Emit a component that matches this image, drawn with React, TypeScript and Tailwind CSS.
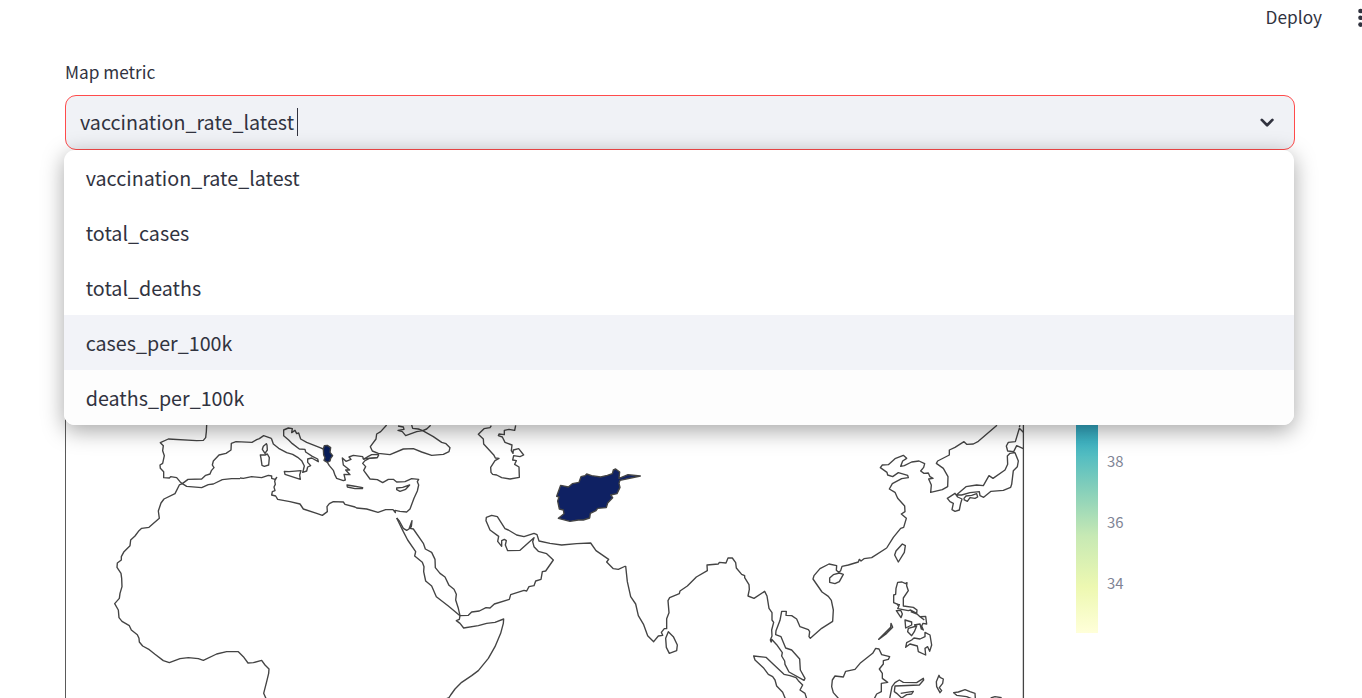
import React from "react";

const options = ["vaccination_rate_latest", "total_cases", "total_deaths", "cases_per_100k", "deaths_per_100k"];
const highlighted = 3;

/* Each tile holds coastlines in thirds of a pixel, offset to the tile's origin. */
const tiles: { x: number; y: number; d: string[] }[] = [
  {
    x: 50,
    y: 415,
    d: [
      "M470 30L469 50 467 68 460 76 440 77 355 72 331 83 340 92 338 107 343 122 338 145 330 150 331 160 341 170 341 188 358 189 362 185 380 188 390 200 397 206 414 193 455 192 467 181 480 177 484 167 492 158 487 150 490 138 507 120 528 115 543 105 544 85 558 80 606 82 620 74 628 71 641 62 664 70",
      "M570 191L545 191 517 194 490 207 475 209 455 218 410 214 397 206 388 210 375 236 342 252 333 264 325 288 328 310 297 337 275 340 267 347 255 363 242 375 240 392 222 410 214 425 214 435 202 444 201 457 213 475 215 490 216 515 210 535 208 550 194 566 205 585 207 608 216 619 238 632 244 645 262 659 267 670 268 681 278 693 298 704 315 718 340 737 358 743 390 731 415 728 445 731 460 736 500 717 530 710 565 710 580 725 594 744 610 743 635 736 645 750 657 762 656 775 650 800 641 835 650 855",
    ],
  },
  {
    x: 240,
    y: 415,
    d: [
      "M94 70L100 87 116 100 140 113 158 118 173 127 185 137 193 153 190 165 188 172 200 168 203 156 212 152 203 142 203 132 215 129 235 140 233 132 217 124 197 111 195 103 178 102 157 86 146 75 131 62 131 45 145 39 157 41 155 53 165 46 170 56 176 54 182 72 200 82 240 98 250 102",
      "M262 142L268 152 280 166 284 178 290 190 310 197 316 195 312 178 330 179 317 165 329 165 310 150 307 129 318 139 333 133 327 126 340 121 368 125 371 133 385 124 395 119 414 118 416 120 412 128 388 130 375 137 368 145 377 155 371 166 390 192 412 194 428 203 445 193 460 193 470 201 495 200 515 191 536 193 532 200 536 210 532 228 522 250 510 282 500 291 480 289 465 286 466 293 459 284 437 284 414 292 380 282 350 279 345 276 315 268 310 261 280 260 268 266 261 275 262 290 247 301 230 295 190 282 180 267 150 260 113 253 107 243 95 240 97 230 105 227 102 216 106 208 104 198 110 187 105 193 95 190 95 183 85 181 65 188 35 185 10 190 0 189",
      "M440 30L422 50 410 57 408 72 391 95 397 108 415 115 450 119 490 102 520 101 545 111 575 121 610 118 627 110 630 98 618 86 605 82 580 65 548 47 530 50 497 62 487 50 474 46 492 43 490 36 474 33M515 30L518 40 535 42 548 47 560 42 572 31",
      "M79 86L70 94 67 103 75 115 82 105 81 90ZM61 120L75 120 82 117 88 128 86 150 73 154 66 151 63 130ZM133 169L147 170 183 167 179 180 181 193 135 178ZM321 210L340 213 368 218 367 221 345 221 322 216ZM470 219L488 217 509 210 497 223 480 229 470 224ZM368 131L385 130 412 128",
    ],
  },
  {
    x: 470,
    y: 415,
    d: [
      "M64 32L60 38 42 41 25 58 40 72 41 87 72 121 76 129 87 130 75 137 62 157 63 172 68 178 80 180 95 188 120 192 148 187 147 156 134 148 139 137 128 135 131 122 150 125 161 120 146 101 130 105 129 115 124 107 126 90 105 82 97 66 85 62 87 57 103 59 103 46 117 43 134 46 137 31",
    ],
  },
  {
    x: 860,
    y: 415,
    d: [
      "M80 399L100 367 122 340 131 337 139 310 124 297 135 290 134 273 113 250 105 232 88 222 97 206 125 191 145 188 143 181 115 173 98 185 83 180 81 172 61 158 67 150 85 149 105 131 130 121 140 130 128 138 122 154 133 152 155 141 177 138 194 146 191 157 182 168 192 175 205 174 210 185 219 190 206 192 214 210 212 232 247 224 263 215 264 185 250 160 229 145 233 138 268 120 268 105 285 97 312 80 320 88 340 87 355 79 411 31",
      "M289 240L318 215 350 210 370 212 387 182 399 190 435 165 443 148 442 123 450 115 465 113 475 138 472 155 460 167 455 208 452 217 430 226 393 229 371 247 360 242 358 230 330 233 305 240ZM262 250L285 235 293 246 306 252 302 265 298 285 285 289 276 284 280 265 270 260ZM312 250L318 243 335 241 350 236 353 246 345 250 330 248 322 259 313 255ZM490 52L478 40 466 80 445 82 439 93 443 108 461 110 470 92 490 101M478 36L480 31",
      "M127 387L136 392 133 412 115 441 104 420 108 408Z",
    ],
  },
  {
    x: 380,
    y: 500,
    d: [
      "M50 54L58 63 70 85 80 91 87 87 96 62 94 80 90 85 100 87 130 130 136 147 155 157 165 178 166 203 180 220 195 231 207 256 222 268 229 283 227 300 235 325 240 347 265 346 275 336 298 333 318 323 330 324 343 312 388 298 392 284 432 271 440 273 447 260 462 257 467 243 483 238 487 215 497 213 520 180 500 161 475 154 462 140 458 125 462 113 420 151 383 152 376 135 379 122 373 118 365 122 365 139 353 124 356 109 330 90 318 62 319 52 335 46 352 50 375 86 385 90 410 105 432 110 462 100 471 104 477 123 510 130 545 135 590 131 632 129 648 152 686 178 680 186 700 206 715 208 737 198",
      "M50 54L70 95 83 120 107 155 104 168 127 187 132 200 131 215 137 243 155 258 169 290 205 318 240 347 238 358 229 362 240 370 251 384 295 377 320 370 345 367 371 357 370 370 362 400 345 440 325 475 295 512 275 527 245 547 225 567 212 585 207 593 195 598",
    ],
  },
  {
    x: 600,
    y: 530,
    d: [
      "M77 108L82 155 92 200 107 222 115 257 131 284 143 317 161 335 175 318 188 316 184 307 193 296 200 296 200 266 207 248 204 212 209 203 238 191 240 183 262 168 289 141 322 122 321 105 355 102 358 97 378 99 384 84 397 84 407 98 409 114 425 133 434 137 434 143 447 164 448 178 444 198 462 205 494 184 501 198 507 235 516 248 516 270 521 277 515 300 516 318 511 330 514 337",
      "M205 305L220 320 232 345 230 362 208 370 199 352 197 325Z",
    ],
  },
  {
    x: 740,
    y: 540,
    d: [
      "M94 307L95 298 110 314 127 338 125 348 134 363 135 373 147 396 192 421 195 415 181 390 179 357 155 330 137 324 123 290 107 284 108 272 120 241 125 214 139 214 138 226 155 227 170 237 180 260 205 269 209 275 207 290 211 295 245 265 278 244 280 210 274 181 265 169 246 156 219 117 222 107 240 86 267 72 290 77 289 91 296 97 302 92 306 79 325 75 355 66 358 58 363 63 372 56 395 53 440 24",
      "M280 104L298 99 310 103 298 125 285 131 269 127 269 114Z",
      "M136 476L128 457 110 438 105 420 98 410 85 403 70 383 45 360 41 348 78 352 100 373 132 403 150 407 168 413 175 422 188 435 180 450 195 460 200 476",
      "M296 476L280 458 275 440 277 420 285 408 310 411 317 394 345 388 362 368 398 340 407 325 417 327 425 344 449 350 445 358 430 362 430 372 418 387 427 400 427 415 443 427 424 430 424 455 410 462 403 476",
      "M449 476L456 440 465 428 478 420 490 427 530 428 550 415 551 420 538 435 465 438 463 455 470 460 485 474 500 464 515 462 520 454 500 457 482 460M597 406L600 412 610 417 608 430 598 443 605 452 600 458 590 440 589 425ZM706 476L705 460 690 455 675 449 655 456 641 458 650 466 680 470 695 476M752 474L765 470 785 473",
      "M473 127L486 126 497 131 501 128 500 137 505 152 490 174 490 198 520 202 531 210 530 220 512 210 505 212 473 206 478 195 461 188 461 165 467 163 468 145ZM471 195L480 194M416 298L452 262 453 250 458 262 440 280ZM469 212L483 212 487 222 483 233ZM495 240L515 246 515 255 497 264ZM505 265L530 258 523 275 515 287 503 275ZM512 215L531 222 540 230 557 229 560 252 549 250 545 258 550 270 544 267 540 252 522 255M540 230L553 240M497 322L500 308 515 300 522 294 540 297 555 290 555 277 570 285 575 315 569 334 563 320 555 325 557 345 535 335 532 318 510 312Z",
    ],
  },
];

function WorldMap() {
  return (
    <svg className="block h-[398px] w-[960px] shrink-0" viewBox="65 300 960 398" fill="none" stroke="#444" strokeLinejoin="round">
      <path d="M65.5 300V698" stroke="#5a5a5a" />
      <path d="M1023.4 300V698" strokeWidth="1.3" />
      {tiles.map((t, i) => (
        <g key={i} transform={`translate(${t.x} ${t.y}) scale(0.33333)`} strokeWidth="4.1">
          {t.d.map((d, j) => (
            <path key={j} d={d} />
          ))}
        </g>
      ))}
      <path
        transform="translate(240 415) scale(0.33333)"
        fill="#081d58"
        strokeWidth="4.1"
        d="M250 102L253 92 262 91 272 98 270 112 278 122 272 130 270 138 262 142 252 136 255 128 251 120Z"
      />
      <path
        transform="translate(470 415) scale(0.33333)"
        fill="#0f2163"
        strokeWidth="4.1"
        d="M272 211L295 216 307 206 327 202 333 185 345 182 350 177 365 182 392 186 412 181 427 176 430 165 437 162 449 171 447 190 474 179 511 183 497 186 450 196 447 205 450 217 441 236 422 240 428 248 413 264 409 278 383 280 378 287 361 295 359 309 340 315 325 315 300 319 265 310 282 296 280 285 268 282 263 258 267 246 260 244Z"
      />
    </svg>
  );
}

function ColorScale() {
  return (
    <div className="ml-[50.5px] flex">
      <div className="h-[333px] w-[22px] bg-[linear-gradient(to_top,#ffffd9_0px,#edf8b1_46px,#c7e9b4_97px,#7fcdbb_148px,#41b6c4_190px,#1d91c0_238px)]" />
      <div className="ml-[9.5px] flex flex-col pt-[130px] text-[14.9px] leading-[61px] text-[#808495]">
        <span>38</span>
        <span>36</span>
        <span>34</span>
      </div>
    </div>
  );
}

export default function App() {
  return (
    <div className="h-[698px] w-[1362px] overflow-hidden bg-white font-['Noto_Sans_CJK_SC',sans-serif] text-[#31333f]">
      <header className="flex h-9 items-center justify-end">
        <span className="mr-[35px] pb-[2px] text-[17.25px] leading-6">Deploy</span>
        <svg className="h-6 w-[5px]" viewBox="0 0 5 24" fill="#31333f">
          <circle cx="3.5" cy="5" r="2.3" />
          <circle cx="3.5" cy="11.8" r="2.3" />
          <circle cx="3.5" cy="18.6" r="2.3" />
        </svg>
      </header>

      <main className="px-[65px] pt-[23px]">
        <label className="block h-9 text-[17.25px] leading-[26px]">Map metric</label>
        <div className="relative">
          <div className="flex h-[55px] w-[1230px] items-center rounded-[11px] border border-[#ff4b4b] bg-[#f0f2f6] pl-[14px] pr-[18.5px]">
            <span className="pb-[2px] text-[19.7px] leading-7">vaccination_rate_latest</span>
            <span className="mb-px ml-[3px] h-7 w-px bg-[#31333f]" />
            <svg className="ml-auto h-[18px] w-[18px]" viewBox="0 0 18 18" fill="none" stroke="#31333f" strokeWidth="2.7" strokeLinecap="round" strokeLinejoin="round">
              <path d="M3.8 5.9L9.1 11.2l5.3-5.3" />
            </svg>
          </div>
          <ul className="absolute -left-[1.3px] top-[55px] z-10 w-[1230.5px] overflow-hidden rounded-[11px] bg-white shadow-[0_5.5px_22px_rgba(0,0,0,0.35)]">
            {options.map((option, i) => (
              <li
                key={option}
                className={
                  i === highlighted
                    ? "flex h-[55px] items-center bg-[#f2f3f8] pl-[22px] text-[19.7px]"
                    : "flex h-[55px] items-center pl-[22px] text-[19.7px] last:bg-[#fdfdfd]"
                }
              >
                {option}
              </li>
            ))}
          </ul>
        </div>
        <div className="mt-[150px] flex h-[398px]">
          <WorldMap />
          <ColorScale />
        </div>
      </main>
    </div>
  );
}
